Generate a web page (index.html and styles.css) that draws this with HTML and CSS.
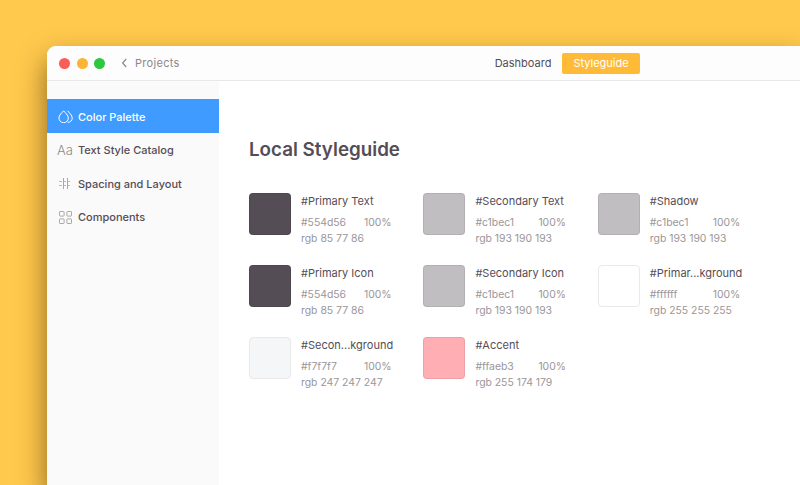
FILE: index.html
```html
<!DOCTYPE html>
<html lang="en">
<head>
    <meta charset="UTF-8">
    <meta name="viewport" content="width=device-width, initial-scale=1.0">
    <title>Local Styleguide</title>
    <link rel="stylesheet" href="styles.css">
</head>
<body>
    <div class="window">
        <header class="titlebar">
            <div class="traffic">
                <span class="light light-red"></span>
                <span class="light light-yellow"></span>
                <span class="light light-green"></span>
            </div>
            <div class="back">
                <svg class="back-icon" width="7" height="10" viewBox="0 0 7 10"><path d="M5.2 1 1.6 5l3.6 4" fill="none" stroke="#8c888b" stroke-width="1.2"/></svg>
                Projects
            </div>
            <nav class="tabs">
                <span class="tab">Dashboard</span>
                <span class="tab tab-active">Styleguide</span>
            </nav>
        </header>
        <div class="body">
            <aside class="sidebar">
                <div class="nav-item nav-active">
                    <span class="nav-icon">
                        <svg width="15" height="13" viewBox="0 0 15 13" fill="none" stroke="#fff" stroke-width="1"><path d="M9.600 0.800C11 2.800 14.200 5 14.200 8a4 4 0 0 1-4.600 4.200"/><path d="M5.600 0.800C4 2.800 0.900 5 0.900 8a4.700 4.700 0 0 0 9.400 0C10.300 5 7.200 2.800 5.600 0.800Z"/></svg>
                    </span>
                    Color Palette
                </div>
                <div class="nav-item">
                    <span class="nav-icon nav-icon-text">Aa</span>
                    Text Style Catalog
                </div>
                <div class="nav-item">
                    <span class="nav-icon">
                        <svg width="13" height="11" viewBox="0 0 13 11" fill="none" stroke="#a9a6a8" stroke-width="1"><path d="M4.500 0v11M8.500 0v11"/><path d="M0 3.500h13M0 7.500h13" stroke-dasharray="3 1 3 1 3" opacity="0.8"/></svg>
                    </span>
                    Spacing and Layout
                </div>
                <div class="nav-item">
                    <span class="nav-icon">
                        <svg width="13" height="13" viewBox="0 0 13 13" fill="none" stroke="#a9a6a8" stroke-width="1"><rect x="0.5" y="0.5" width="4.6" height="4.6" rx="0.6"/><rect x="7.9" y="0.5" width="4.6" height="4.6" rx="0.6"/><rect x="0.5" y="7.9" width="4.6" height="4.6" rx="0.6"/><rect x="7.9" y="7.9" width="4.6" height="4.6" rx="0.6"/></svg>
                    </span>
                    Components
                </div>
            </aside>
            <main class="content">
                <h1>Local Styleguide</h1>
                <div class="palette">
                    <div class="color">
                        <div class="swatch swatch-dark"></div>
                        <div class="info">
                            <div class="name">#Primary Text</div>
                            <div class="meta"><span class="hex">#554d56</span><span>100%</span></div>
                            <div class="meta">rgb 85 77 86</div>
                        </div>
                    </div>
                    <div class="color">
                        <div class="swatch swatch-grey"></div>
                        <div class="info">
                            <div class="name">#Secondary Text</div>
                            <div class="meta"><span class="hex">#c1bec1</span><span>100%</span></div>
                            <div class="meta">rgb 193 190 193</div>
                        </div>
                    </div>
                    <div class="color">
                        <div class="swatch swatch-grey"></div>
                        <div class="info">
                            <div class="name">#Shadow</div>
                            <div class="meta"><span class="hex">#c1bec1</span><span>100%</span></div>
                            <div class="meta">rgb 193 190 193</div>
                        </div>
                    </div>
                    <div class="color">
                        <div class="swatch swatch-dark"></div>
                        <div class="info">
                            <div class="name">#Primary Icon</div>
                            <div class="meta"><span class="hex">#554d56</span><span>100%</span></div>
                            <div class="meta">rgb 85 77 86</div>
                        </div>
                    </div>
                    <div class="color">
                        <div class="swatch swatch-grey"></div>
                        <div class="info">
                            <div class="name">#Secondary Icon</div>
                            <div class="meta"><span class="hex">#c1bec1</span><span>100%</span></div>
                            <div class="meta">rgb 193 190 193</div>
                        </div>
                    </div>
                    <div class="color">
                        <div class="swatch swatch-white"></div>
                        <div class="info">
                            <div class="name">#Primar...kground</div>
                            <div class="meta"><span class="hex">#ffffff</span><span>100%</span></div>
                            <div class="meta">rgb 255 255 255</div>
                        </div>
                    </div>
                    <div class="color">
                        <div class="swatch swatch-light"></div>
                        <div class="info">
                            <div class="name">#Secon...kground</div>
                            <div class="meta"><span class="hex">#f7f7f7</span><span>100%</span></div>
                            <div class="meta">rgb 247 247 247</div>
                        </div>
                    </div>
                    <div class="color">
                        <div class="swatch swatch-accent"></div>
                        <div class="info">
                            <div class="name">#Accent</div>
                            <div class="meta"><span class="hex">#ffaeb3</span><span>100%</span></div>
                            <div class="meta">rgb 255 174 179</div>
                        </div>
                    </div>
                </div>
            </main>
        </div>
    </div>
</body>
</html>
```

FILE: styles.css
```css
html, body {
    height: 100%;
}

body {
    margin: 0;
    padding: 46px 0 0 47px;
    box-sizing: border-box;
    display: flex;
    overflow: hidden;
    background: #ffc94d;
    font-family: 'Inter', sans-serif;
    color: #554d56;
}

.window {
    display: flex;
    flex-direction: column;
    flex: 1;
    background: #ffffff;
    border-radius: 9px 0 0 0;
    box-shadow: 0 14px 28px rgba(60, 35, 0, 0.6);
    overflow: hidden;
}

.titlebar {
    display: flex;
    align-items: center;
    height: 34px;
    flex-shrink: 0;
    background: #fdfdfd;
    border-bottom: 1px solid #e9e8e9;
}

.traffic {
    display: flex;
    gap: 6.5px;
    margin-left: 12px;
}

.light {
    width: 11px;
    height: 11px;
    border-radius: 50%;
}

.light-red {
    background: #f85f59;
}

.light-yellow {
    background: #fbb434;
}

.light-green {
    background: #2cc840;
}

.back {
    display: flex;
    align-items: center;
    gap: 7px;
    margin-left: 16px;
    font-size: 11px;
    font-weight: 400;
    letter-spacing: 0.3px;
    color: #8c888b;
}

.tabs {
    display: flex;
    align-items: center;
    gap: 11px;
    margin-left: 315px;
}

.tab {
    font-size: 11px;
    font-weight: 400;
    color: #554d56;
}

.tab-active {
    display: flex;
    align-items: center;
    padding: 0 11px;
    height: 21px;
    border-radius: 2px;
    background: #ffbb38;
    color: #ffffff;
}

.body {
    display: flex;
    flex: 1;
}

.sidebar {
    width: 172px;
    flex-shrink: 0;
    padding-top: 18px;
    background: #fafafa;
}

.nav-item {
    display: flex;
    align-items: center;
    height: 33.5px;
    padding-top: 2px;
    box-sizing: border-box;
    font-size: 11px;
    font-weight: 500;
    color: #554d56;
}

.nav-active {
    background: #3f9bff;
    color: #ffffff;
}

.nav-icon {
    display: flex;
    justify-content: center;
    align-items: center;
    width: 16px;
    margin: 0 5px 0 10px;
}

.nav-icon-text {
    font-size: 13px;
    font-weight: 300;
    color: #8f8b8e;
}

.content {
    flex: 1;
    padding: 54px 0 0 30px;
}

h1 {
    margin: 0 0 28px;
    font-size: 18.8px;
    line-height: 30px;
    font-weight: 600;
    color: #554d56;
}

.palette {
    display: grid;
    grid-template-columns: repeat(3, 174.4px);
    grid-auto-rows: 72px;
}

.color {
    display: flex;
    gap: 10px;
}

.swatch {
    width: 42px;
    height: 42px;
    box-sizing: border-box;
    border-radius: 4px;
    border: 1px solid rgba(0, 0, 0, 0.07);
}

.swatch-dark {
    background: #554d56;
}

.swatch-grey {
    background: #c1bec1;
}

.swatch-white {
    background: #ffffff;
    border-color: #e9e9e9;
}

.swatch-light {
    background: #f5f6f7;
    border-color: #e9e9e9;
}

.swatch-accent {
    background: #ffaeb3;
}

.name {
    font-size: 11px;
    line-height: 16px;
    margin-bottom: 6px;
    color: #554d56;
}

.meta {
    display: flex;
    font-size: 10.4px;
    line-height: 16px;
    color: #9a9699;
}

.hex {
    width: 63px;
}
```
